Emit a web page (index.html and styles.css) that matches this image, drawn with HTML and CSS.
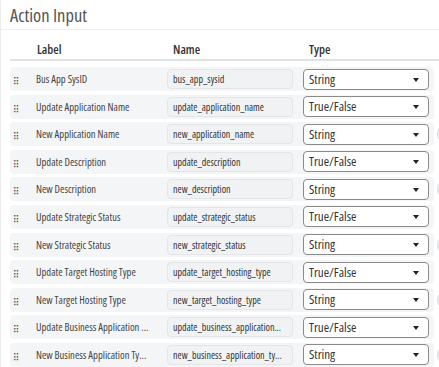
FILE: index.html
```html
<!DOCTYPE html>
<html lang="en">
<head>
    <meta charset="UTF-8">
    <title>Action Input</title>
    <link rel="stylesheet" href="styles.css">
</head>
<body>
    <div class="panel">
        <header class="panel-header">
            <h1>Action Input</h1>
        </header>

        <div class="panel-body">
            <div class="head-row">
                <div class="col-handle"></div>
                <div class="col-label">Label</div>
                <div class="col-name">Name</div>
                <div class="col-type">Type</div>
            </div>

            <div class="row">
                <div class="col-handle"><span class="grip">⠿</span></div>
                <div class="col-label">Bus App SysID</div>
                <div class="col-name"><div class="name-box">bus_app_sysid</div></div>
                <div class="col-type"><div class="select">String<span class="caret"></span></div></div>
            </div>
            <div class="row">
                <div class="col-handle"><span class="grip">⠿</span></div>
                <div class="col-label">Update Application Name</div>
                <div class="col-name"><div class="name-box">update_application_name</div></div>
                <div class="col-type"><div class="select">True/False<span class="caret"></span></div></div>
            </div>
            <div class="row">
                <div class="col-handle"><span class="grip">⠿</span></div>
                <div class="col-label">New Application Name</div>
                <div class="col-name"><div class="name-box">new_application_name</div></div>
                <div class="col-type"><div class="select">String<span class="caret"></span></div></div>
                <div class="edit-btn"></div>
            </div>
            <div class="row">
                <div class="col-handle"><span class="grip">⠿</span></div>
                <div class="col-label">Update Description</div>
                <div class="col-name"><div class="name-box">update_description</div></div>
                <div class="col-type"><div class="select">True/False<span class="caret"></span></div></div>
            </div>
            <div class="row">
                <div class="col-handle"><span class="grip">⠿</span></div>
                <div class="col-label">New Description</div>
                <div class="col-name"><div class="name-box">new_description</div></div>
                <div class="col-type"><div class="select">String<span class="caret"></span></div></div>
                <div class="edit-btn"></div>
            </div>
            <div class="row">
                <div class="col-handle"><span class="grip">⠿</span></div>
                <div class="col-label">Update Strategic Status</div>
                <div class="col-name"><div class="name-box">update_strategic_status</div></div>
                <div class="col-type"><div class="select">True/False<span class="caret"></span></div></div>
            </div>
            <div class="row">
                <div class="col-handle"><span class="grip">⠿</span></div>
                <div class="col-label">New Strategic Status</div>
                <div class="col-name"><div class="name-box">new_strategic_status</div></div>
                <div class="col-type"><div class="select">String<span class="caret"></span></div></div>
                <div class="edit-btn"></div>
            </div>
            <div class="row">
                <div class="col-handle"><span class="grip">⠿</span></div>
                <div class="col-label">Update Target Hosting Type</div>
                <div class="col-name"><div class="name-box">update_target_hosting_type</div></div>
                <div class="col-type"><div class="select">True/False<span class="caret"></span></div></div>
            </div>
            <div class="row">
                <div class="col-handle"><span class="grip">⠿</span></div>
                <div class="col-label">New Target Hosting Type</div>
                <div class="col-name"><div class="name-box">new_target_hosting_type</div></div>
                <div class="col-type"><div class="select">String<span class="caret"></span></div></div>
                <div class="edit-btn"></div>
            </div>
            <div class="row">
                <div class="col-handle"><span class="grip">⠿</span></div>
                <div class="col-label">Update Business Application ...</div>
                <div class="col-name"><div class="name-box">update_business_application...</div></div>
                <div class="col-type"><div class="select">True/False<span class="caret"></span></div></div>
            </div>
            <div class="row">
                <div class="col-handle"><span class="grip">⠿</span></div>
                <div class="col-label">New Business Application Ty...</div>
                <div class="col-name"><div class="name-box">new_business_application_ty...</div></div>
                <div class="col-type"><div class="select">String<span class="caret"></span></div></div>
                <div class="edit-btn"></div>
            </div>
        </div>
    </div>
</body>
</html>
```

FILE: styles.css
```css
* {
    margin: 0;
    padding: 0;
    box-sizing: border-box;
}

body {
    font-family: 'Open Sans', sans-serif;
    font-stretch: 75%;
    background-color: #fff;
    color: #333;
    overflow: hidden;
}

.panel {
    width: 439px;
    height: 367px;
    overflow: hidden;
    border-left: 1px solid #ececec;
}

.panel-header {
    height: 30px;
    padding: 4px 9px 0;
    border-bottom: 1px solid #f0f0f0;
}

.panel-header h1 {
    font-size: 18.5px;
    font-weight: 400;
    color: #555;
    line-height: 22px;
}

.panel-body {
    padding: 9px 0 0 9px;
}

.head-row {
    display: flex;
    align-items: center;
    height: 22px;
    border-bottom: 2px solid #dfe2e5;
    margin-bottom: 6px;
    color: #333;
}

.head-row div {
    font-size: 12.5px;
    font-weight: 600;
    color: #333;
}

.head-row .col-label { padding-left: 1px; }
.head-row .col-name { padding-left: 6px; }
.head-row .col-type { padding-left: 6px; }

.row {
    display: flex;
    align-items: center;
    width: 424px;
    height: 24px;
    margin-bottom: 3.6px;
    background-color: #f4f5f6;
    border-radius: 4px;
    position: relative;
}

.col-handle { width: 26px; padding-left: 3px; }
.col-label { width: 131px; font-size: 10.6px; color: #444; white-space: nowrap; }
.col-name { width: 136px; }
.col-type { width: 126px; }

.grip {
    font-size: 10px;
    color: #555;
    font-family: 'DejaVu Sans', sans-serif;
}

.name-box {
    width: 126px;
    height: 20px;
    line-height: 18px;
    padding-left: 5px;
    font-size: 10px;
    color: #333;
    background-color: #f1f2f3;
    border: 1px solid #e3e5e8;
    border-radius: 4px;
    white-space: nowrap;
    overflow: hidden;
}

.select {
    position: relative;
    width: 126px;
    height: 21px;
    line-height: 19px;
    padding-left: 5px;
    font-size: 13px;
    color: #333;
    background-color: #fff;
    border: 1px solid #8a8a8a;
    border-radius: 4px;
}

.caret {
    position: absolute;
    right: 9px;
    top: 8px;
    width: 0;
    height: 0;
    border-left: 3.5px solid transparent;
    border-right: 3.5px solid transparent;
    border-top: 4px solid #222;
}

.edit-btn {
    position: absolute;
    left: 427px;
    top: 1px;
    width: 22px;
    height: 22px;
    border: 1px solid #d6d8db;
    border-radius: 50%;
    background-color: #f1f2f3;
}
```
